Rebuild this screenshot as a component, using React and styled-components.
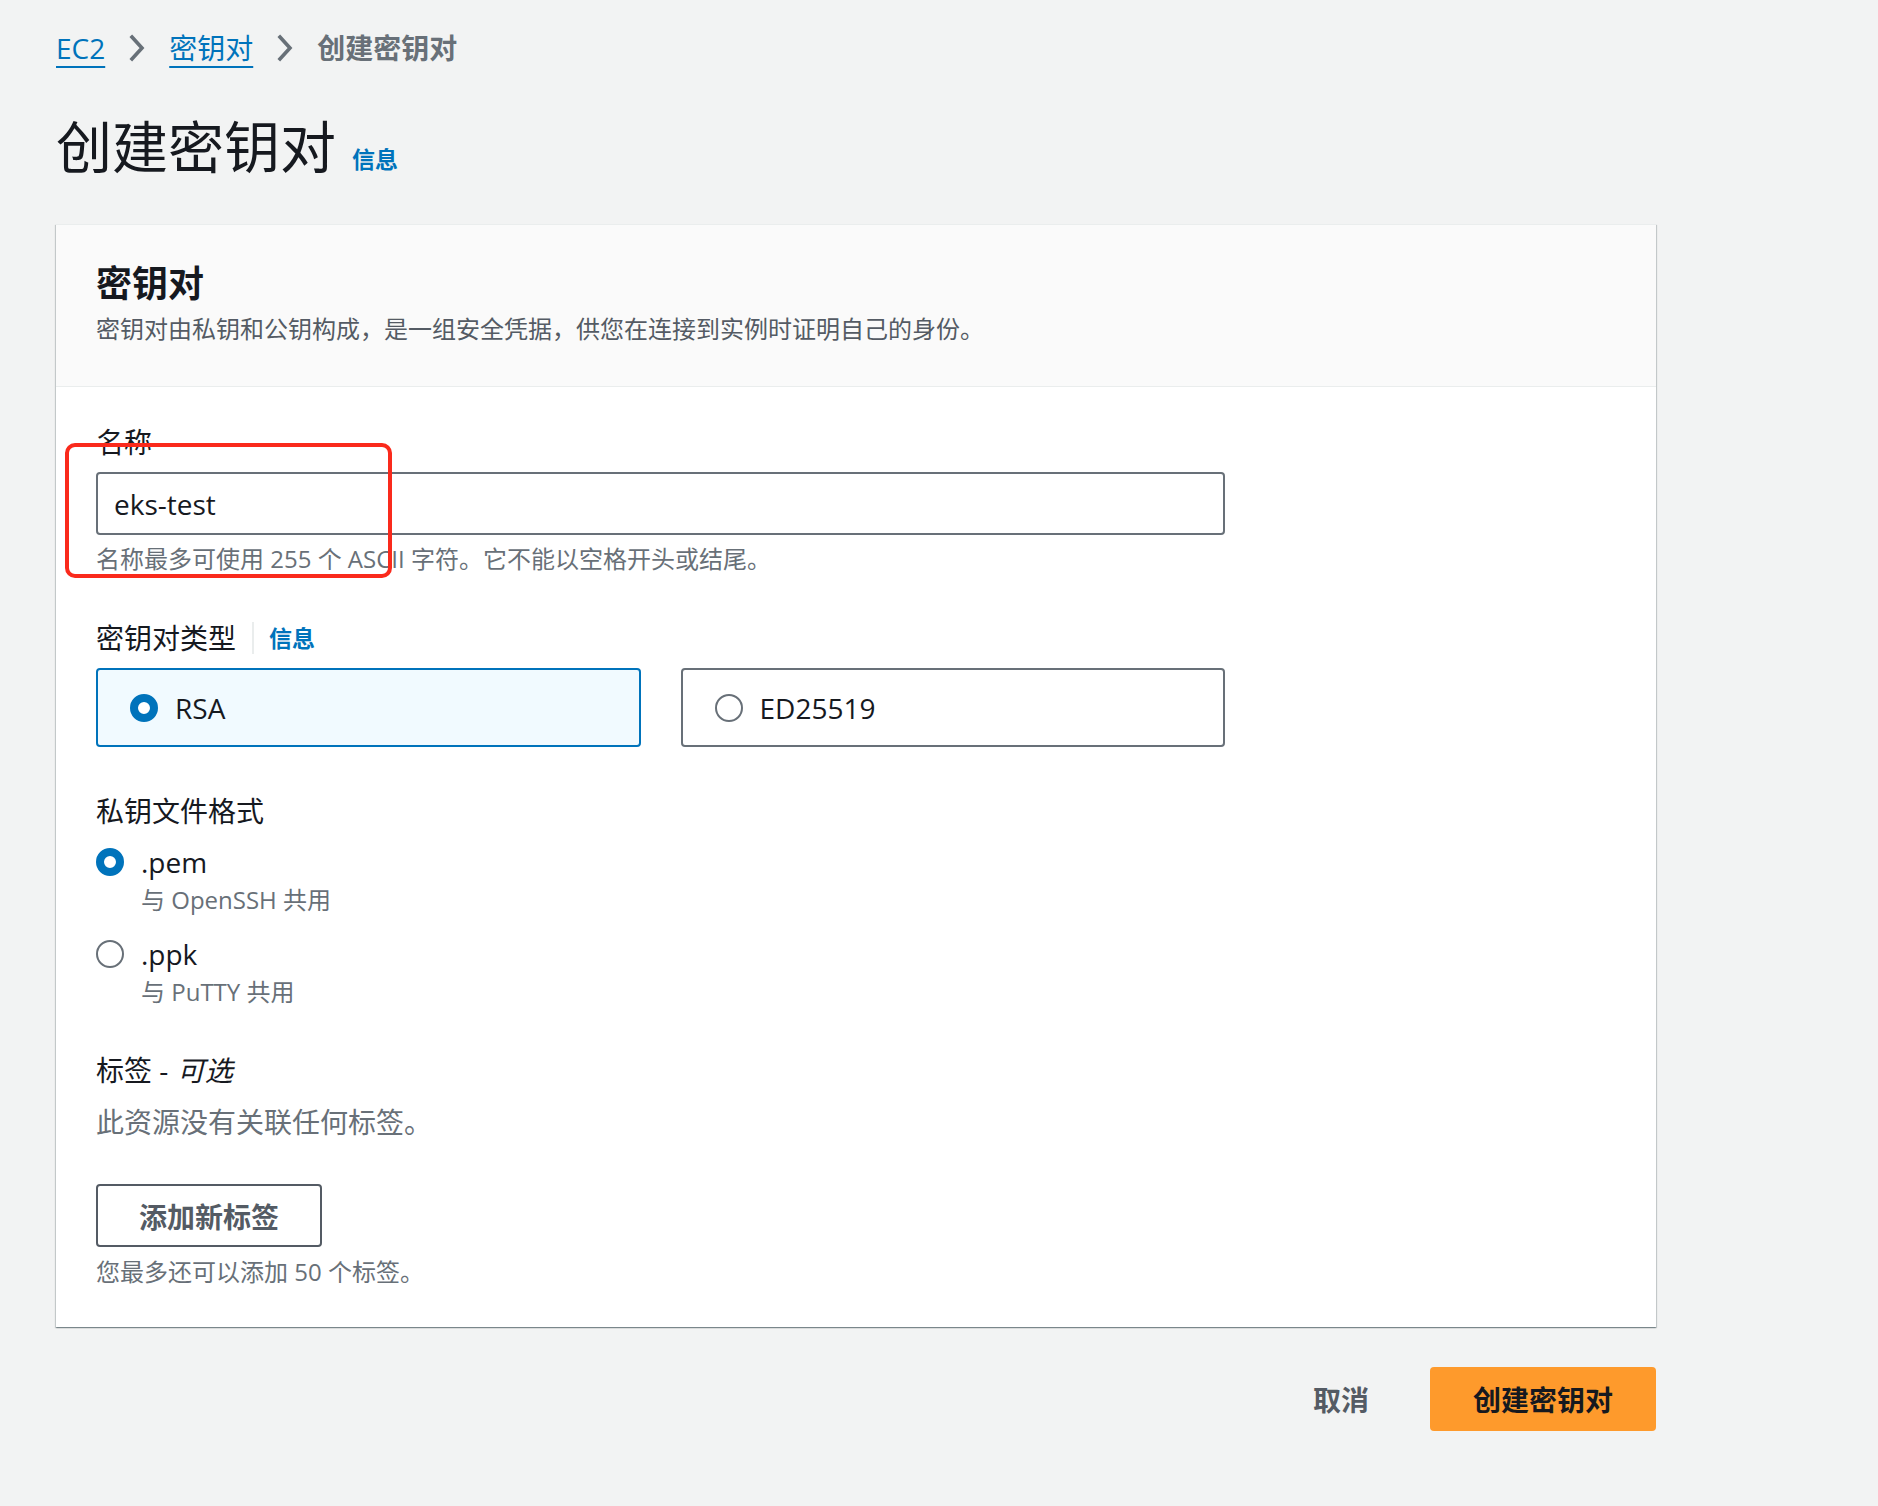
import React, { useState } from "react"
import styled, { createGlobalStyle } from "styled-components"

const GlobalStyle = createGlobalStyle`
  body {
    margin: 0;
    background: #f2f3f3;
    font-family: "Open Sans", "Noto Sans CJK SC", sans-serif;
    color: #16191f;
  }
`

const Chevron = () => (
  <svg width="18" height="30" viewBox="0 0 18 30">
    <polyline points="4,4 14,15 4,26" fill="none" stroke="#687078" strokeWidth="3.6" strokeLinecap="square" />
  </svg>
)

const keyTypes = ["RSA", "ED25519"]
const formats = [
  { value: ".pem", hint: "与 OpenSSH 共用" },
  { value: ".ppk", hint: "与 PuTTY 共用" },
]

export default function App() {
  const [keyType, setKeyType] = useState("RSA")
  const [format, setFormat] = useState(".pem")
  const [name, setName] = useState("eks-test")

  return (
    <Page>
      <GlobalStyle />
      <Breadcrumbs>
        <Crumb href="#">EC2</Crumb>
        <Chevron />
        <Crumb href="#">密钥对</Crumb>
        <Chevron />
        <Current>创建密钥对</Current>
      </Breadcrumbs>

      <TitleRow>
        <Title>创建密钥对</Title>
        <InfoLink href="#" $size={23}>信息</InfoLink>
      </TitleRow>

      <Card>
        <CardHeader>
          <CardTitle>密钥对</CardTitle>
          <CardDescription>密钥对由私钥和公钥构成，是一组安全凭据，供您在连接到实例时证明自己的身份。</CardDescription>
        </CardHeader>

        <CardBody>
          <NameField>
            <Label>名称</Label>
            <Input value={name} onChange={(e) => setName(e.target.value)} />
            <Constraint>名称最多可使用 255 个 ASCII 字符。它不能以空格开头或结尾。</Constraint>
            <Highlight />
          </NameField>

          <Label $top={45}>
            密钥对类型
            <Divider />
            <InfoLink href="#" $size={23}>信息</InfoLink>
          </Label>
          <Tiles>
            {keyTypes.map((t) => (
              <Tile key={t} $selected={keyType === t} onClick={() => setKeyType(t)}>
                <Radio $checked={keyType === t} />
                <TileText>{t}</TileText>
              </Tile>
            ))}
          </Tiles>

          <Label $top={46}>私钥文件格式</Label>
          <RadioList>
            {formats.map((f) => (
              <RadioItem key={f.value} onClick={() => setFormat(f.value)}>
                <RadioRow>
                  <Radio $checked={format === f.value} />
                  <OptionText>{f.value}</OptionText>
                </RadioRow>
                <Hint>{f.hint}</Hint>
              </RadioItem>
            ))}
          </RadioList>

          <Label $top={44}>
            标签 - <Optional>可选</Optional>
          </Label>
          <EmptyText>此资源没有关联任何标签。</EmptyText>
          <SecondaryButton>添加新标签</SecondaryButton>
          <Constraint $top={9}>您最多还可以添加 50 个标签。</Constraint>
        </CardBody>
      </Card>

      <Actions>
        <LinkButton>取消</LinkButton>
        <PrimaryButton>创建密钥对</PrimaryButton>
      </Actions>
    </Page>
  )
}

const Page = styled.div`
  width: 1600px;
  padding: 28px 0 60px 56px;
`

const Breadcrumbs = styled.nav`
  display: flex;
  align-items: center;
  gap: 23px;
  height: 40px;
  font-size: 28px;
`

const Crumb = styled.a`
  color: #0073bb;
  text-decoration: underline;
  text-decoration-thickness: 2px;
  text-underline-offset: 7px;
  line-height: 40px;
`

const Current = styled.span`
  color: #687078;
  font-weight: 700;
  line-height: 40px;
`

const TitleRow = styled.div`
  display: flex;
  align-items: baseline;
  gap: 16px;
  margin-top: 46px;
`

const Title = styled.h1`
  margin: 0;
  font-size: 56px;
  line-height: 64px;
  font-weight: 400;
  color: #16191f;
`

const InfoLink = styled.a`
  color: #0073bb;
  font-size: ${(p) => p.$size}px;
  font-weight: 700;
  text-decoration: none;
`

const Card = styled.section`
  margin-top: 46px;
  background: #fff;
  border-top: 1px solid #eaeded;
  box-shadow: 0 1px 1px 0 rgba(0, 28, 36, 0.3), 1px 1px 1px 0 rgba(0, 28, 36, 0.15),
    -1px 1px 1px 0 rgba(0, 28, 36, 0.15);
`

const CardHeader = styled.div`
  background: #fafafa;
  border-bottom: 1px solid #eaeded;
  padding: 37px 40px 40px;
`

const CardTitle = styled.h2`
  margin: 0;
  font-size: 36px;
  line-height: 44px;
  font-weight: 700;
`

const CardDescription = styled.p`
  margin: 6px 0 0;
  font-size: 24px;
  line-height: 34px;
  color: #545b64;
`

const CardBody = styled.div`
  padding: 37px 40px 39px;
  width: 1129px;
`

const NameField = styled.div`
  position: relative;
`

const Highlight = styled.div`
  position: absolute;
  left: -31px;
  top: 19px;
  width: 327px;
  height: 135px;
  box-sizing: border-box;
  border: 4px solid #fa2a1c;
  border-radius: 10px;
  pointer-events: none;
`

const Label = styled.div`
  display: flex;
  align-items: center;
  margin-top: ${(p) => p.$top || 0}px;
  font-size: 28px;
  line-height: 36px;
  color: #16191f;
`

const Optional = styled.i`
  margin-left: 0.3em;
`

const Divider = styled.span`
  width: 2px;
  height: 32px;
  margin: 0 15px 0 16px;
  background: #eaeded;
`

const Input = styled.input`
  display: block;
  width: 100%;
  height: 63px;
  margin-top: 12px;
  box-sizing: border-box;
  padding: 0 16px;
  border: 2px solid #687078;
  border-radius: 4px;
  font-family: inherit;
  font-size: 28px;
  color: #16191f;
  background: #fff;
  outline: none;
`

const Constraint = styled.div`
  margin-top: ${(p) => p.$top ?? 8}px;
  font-size: 24px;
  line-height: 32px;
  color: #687078;
`

const Tiles = styled.div`
  display: grid;
  grid-template-columns: 1fr 1fr;
  gap: 40px;
  margin-top: 12px;
`

const Tile = styled.div`
  display: flex;
  align-items: center;
  gap: 17px;
  height: 79px;
  box-sizing: border-box;
  padding: 0 32px;
  border: 2px solid ${(p) => (p.$selected ? "#0073bb" : "#687078")};
  border-radius: 4px;
  background: ${(p) => (p.$selected ? "#f1faff" : "#fff")};
  cursor: pointer;
`

const Radio = styled.span`
  flex: none;
  width: 28px;
  height: 28px;
  box-sizing: border-box;
  border-radius: 50%;
  border: ${(p) => (p.$checked ? "8px solid #0073bb" : "2px solid #687078")};
  background: #fff;
`

const TileText = styled.span`
  font-size: 28px;
  line-height: 36px;
`

const RadioList = styled.div`
  display: flex;
  flex-direction: column;
  gap: 20px;
  margin-top: 15px;
`

const RadioItem = styled.div`
  cursor: pointer;
`

const RadioRow = styled.div`
  display: flex;
  align-items: center;
  gap: 17px;
`

const OptionText = styled.span`
  font-size: 28px;
  line-height: 36px;
`

const Hint = styled.div`
  margin-top: 4px;
  padding-left: 45px;
  font-size: 24px;
  line-height: 32px;
  color: #687078;
`

const EmptyText = styled.div`
  margin-top: 16px;
  font-size: 28px;
  line-height: 36px;
  color: #687078;
`

const SecondaryButton = styled.button`
  display: block;
  margin-top: 44px;
  width: 226px;
  height: 63px;
  border: 2px solid #545b64;
  border-radius: 4px;
  background: #fff;
  color: #545b64;
  font-family: inherit;
  font-size: 28px;
  font-weight: 700;
  cursor: pointer;
`

const Actions = styled.div`
  display: flex;
  justify-content: flex-end;
  align-items: center;
  gap: 31px;
  margin-top: 40px;
`

const LinkButton = styled.button`
  height: 64px;
  padding: 0 30px;
  border: none;
  background: transparent;
  color: #545b64;
  font-family: inherit;
  font-size: 28px;
  font-weight: 700;
  cursor: pointer;
`

const PrimaryButton = styled.button`
  height: 64px;
  width: 226px;
  border: none;
  border-radius: 4px;
  background: #fe9a2c;
  color: #16191f;
  font-family: inherit;
  font-size: 28px;
  font-weight: 700;
  cursor: pointer;
`
